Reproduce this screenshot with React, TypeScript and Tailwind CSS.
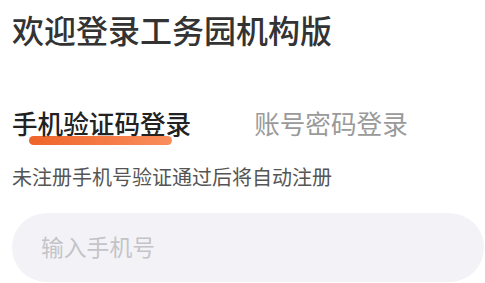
import React from "react";

export default function App() {
  return (
    <div
      className="w-[485px] h-[283px] bg-white overflow-hidden pl-[12px]"
      style={{ fontFamily: '"Noto Sans CJK SC", "Noto Sans", sans-serif' }}
    >
      <h1 className="pt-[9px] text-[32px] leading-[40px] font-medium text-[#333333] tracking-[0px]">
        欢迎登录工务园机构版
      </h1>
      <div className="mt-[57px] flex items-end gap-[63px]">
        <div className="relative">
          <span className="relative z-10 text-[25.6px] leading-[34px] font-medium text-[#222222]">
            手机验证码登录
          </span>
          <div className="absolute left-[17px] top-[30px] w-[143px] h-[9px] rounded-full bg-gradient-to-r from-[#ef6428] to-[#f98e5c]" />
        </div>
        <span className="text-[25.6px] leading-[34px] text-[#9a9a9a]">账号密码登录</span>
      </div>
      <p className="mt-[23px] text-[20px] leading-[28px] text-[#555555]">
        未注册手机号验证通过后将自动注册
      </p>
      <div className="mt-[22px] w-[472px] h-[69px] rounded-full bg-[#f3f3f7] flex items-center pl-[29px]">
        <span className="text-[22.8px] text-[#c4c4c8]">输入手机号</span>
      </div>
    </div>
  );
}
